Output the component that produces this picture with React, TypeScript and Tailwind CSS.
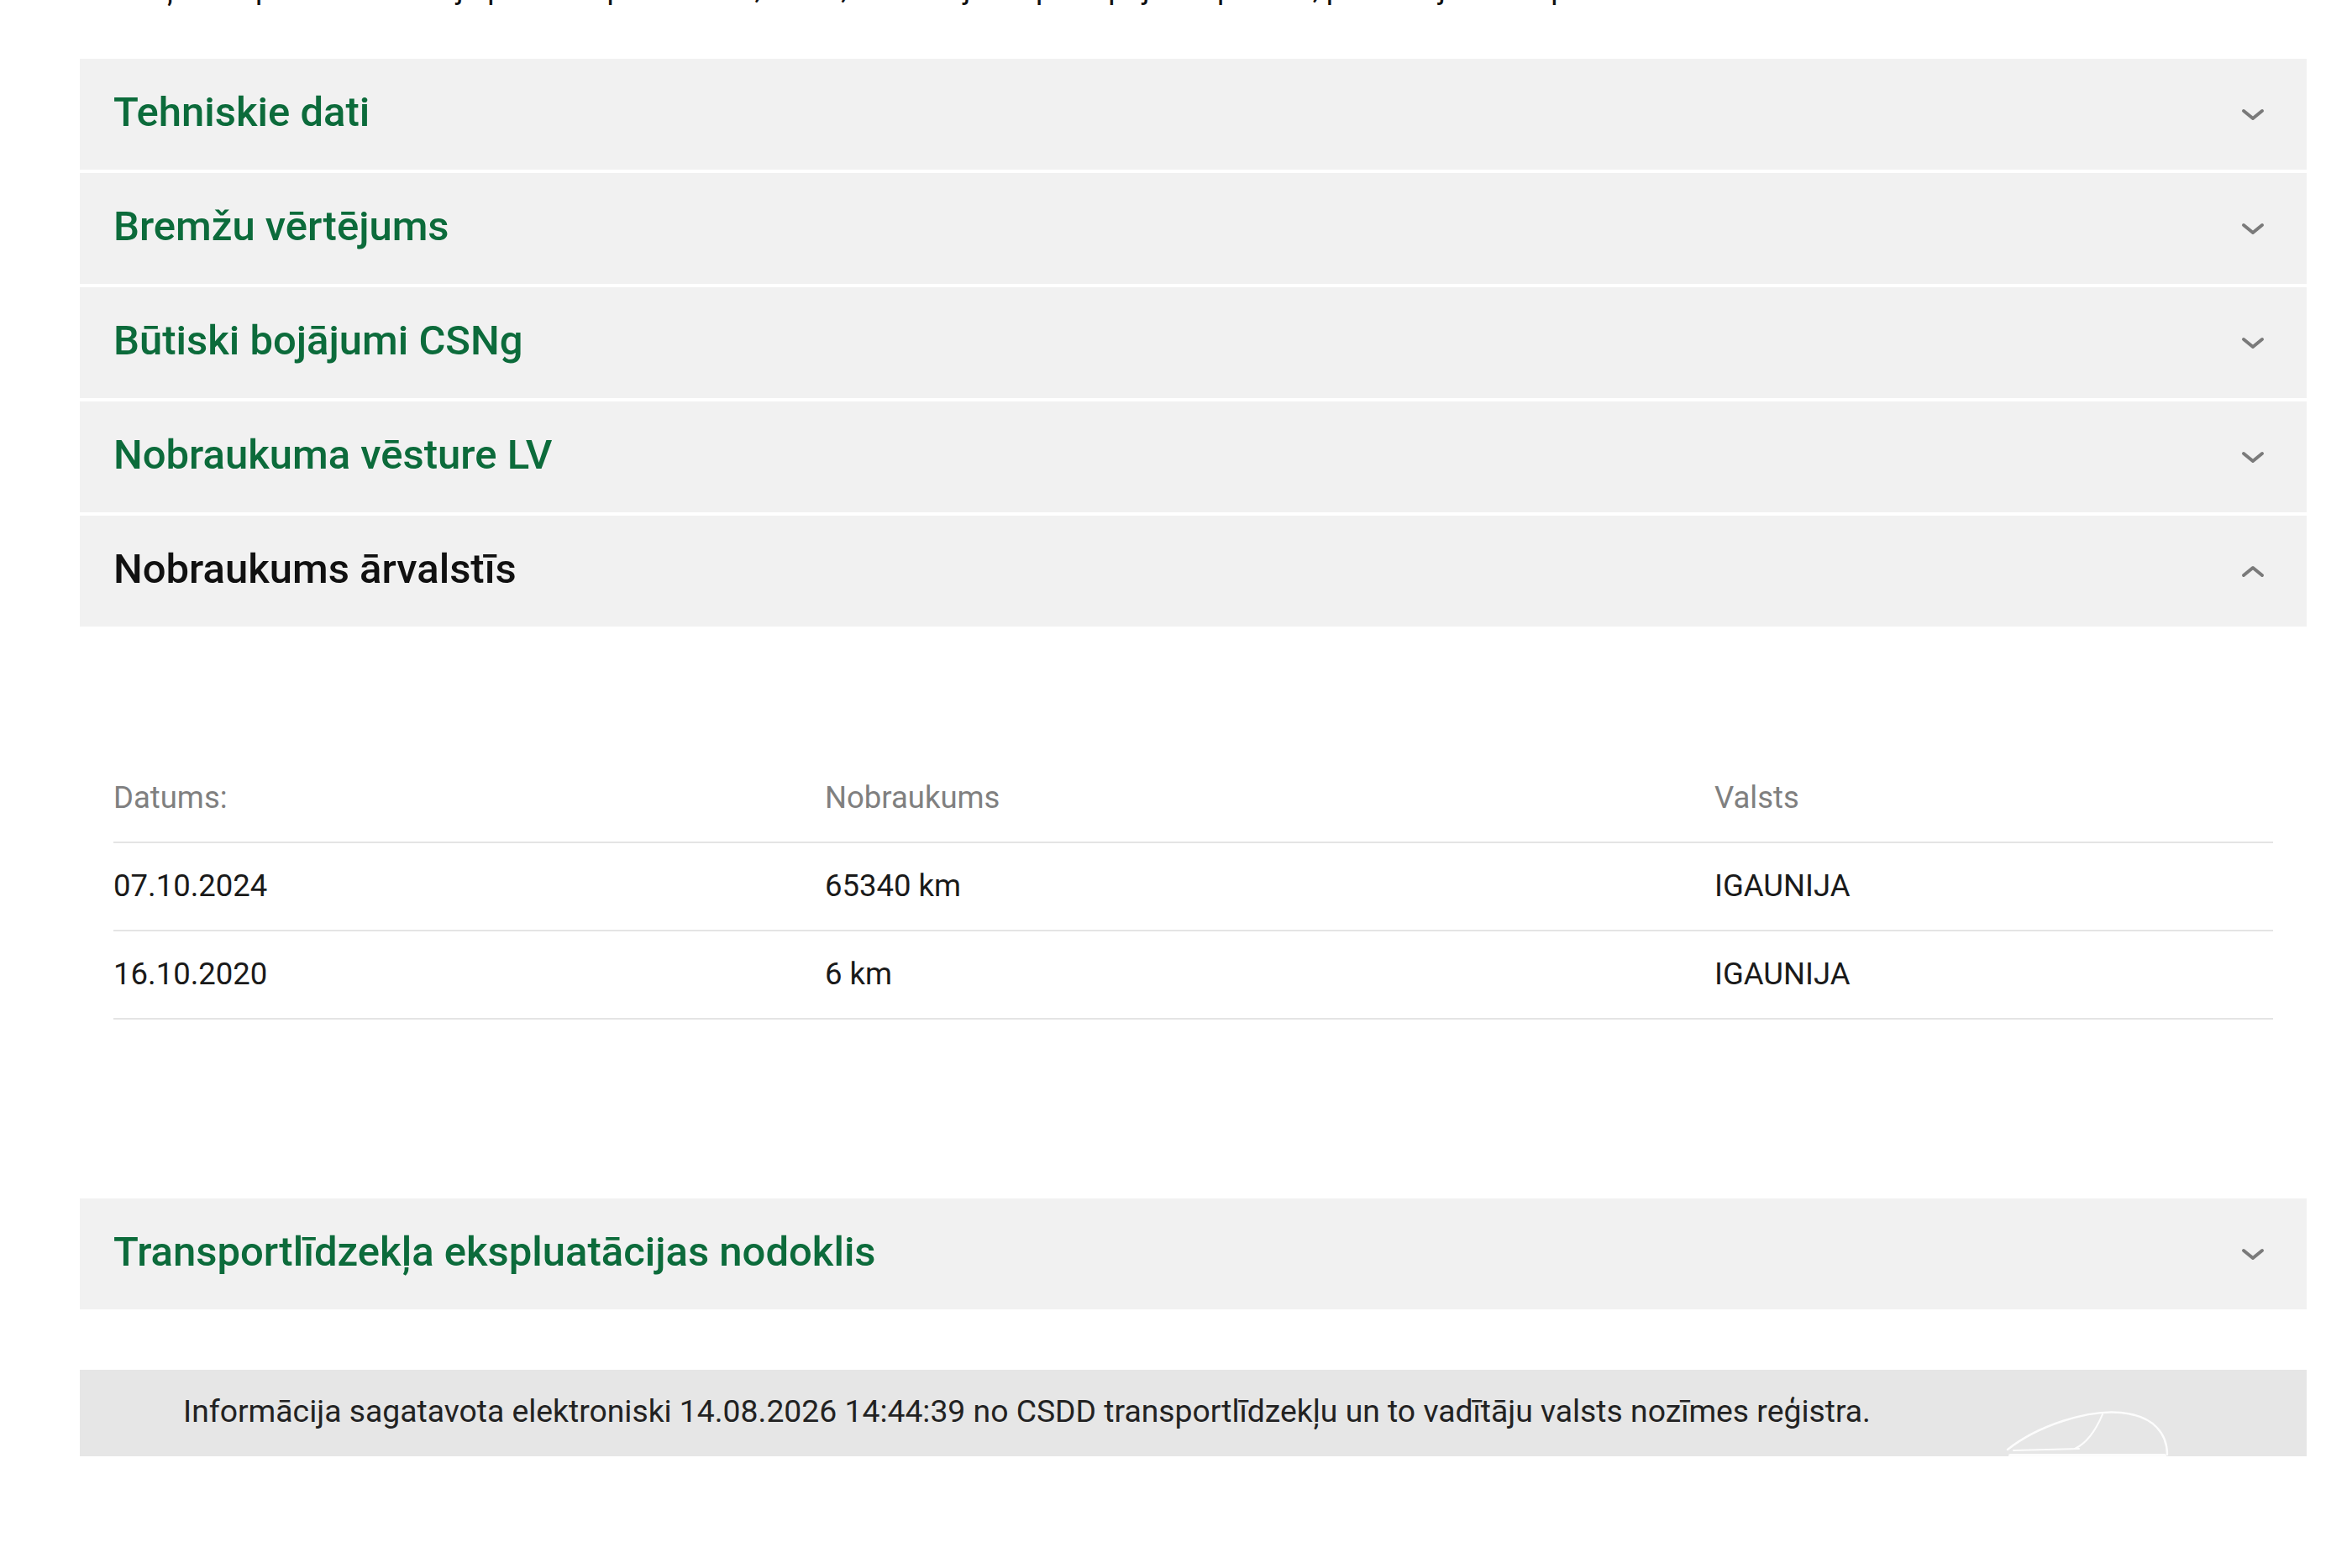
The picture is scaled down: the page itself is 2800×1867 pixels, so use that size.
import React from "react";

type Section = { title: string; open?: boolean };

const sections: Section[] = [
  { title: "Tehniskie dati" },
  { title: "Bremžu vērtējums" },
  { title: "Būtiski bojājumi CSNg" },
  { title: "Nobraukuma vēsture LV" },
  { title: "Nobraukums ārvalstīs", open: true },
];

const rows = [
  { date: "07.10.2024", km: "65340 km", country: "IGAUNIJA" },
  { date: "16.10.2020", km: "6 km", country: "IGAUNIJA" },
];

function Chevron({ up }: { up?: boolean }) {
  return (
    <svg width="30" height="18" viewBox="0 0 30 18" className="shrink-0">
      <polyline
        points={up ? "4,14 15,5 26,14" : "4,5 15,14 26,5"}
        fill="none"
        stroke="#7a7a7a"
        strokeWidth="4"
        strokeLinecap="round"
        strokeLinejoin="round"
      />
    </svg>
  );
}

function Header({ title, open }: Section) {
  return (
    <div className="flex h-[132px] items-center justify-between bg-[#f1f1f1] pl-[40px] pr-[49px]">
      <span
        className={
          "pb-[5px] text-[49px] font-medium leading-none " +
          (open ? "text-[#111111]" : "text-[#0c6b3b]")
        }
      >
        {title}
      </span>
      <Chevron up={open} />
    </div>
  );
}

export default function App() {
  return (
    <div
      className="min-h-[1867px] w-[2800px] bg-white"
      style={{ fontFamily: "Roboto, 'Noto Sans', Arial, sans-serif" }}
    >
      {/* last line of the preceding paragraph, scrolled mostly out of view */}
      <div className="h-[14px] overflow-hidden pl-[98px]">
        <p className="mt-[-38px] whitespace-nowrap text-[36px] leading-[48px] text-[#111111]">
          Lai saņemtu pilnu informāciju par transportlīdzekli, lūdzu, izmantojiet e-pakalpojumu
          portālu, pievienojot savu pieteikuma kodu.
        </p>
      </div>

      <div className="pl-[95px] pr-[54px] pt-[56px]">
        <div className="flex flex-col gap-[4px]">
          {sections.map((s) => (
            <Header key={s.title} {...s} />
          ))}
        </div>

        {/* expanded section: foreign mileage */}
        <div className="pb-[213px] pl-[40px] pr-[40px] pt-[153px]">
          <div className="grid grid-cols-[847px_1059px_1fr] text-[36.5px]">
            <div className="flex h-[105px] items-center border-b-2 border-[#e4e4e4] text-[#808080]">
              Datums:
            </div>
            <div className="flex h-[105px] items-center border-b-2 border-[#e4e4e4] text-[#808080]">
              Nobraukums
            </div>
            <div className="flex h-[105px] items-center border-b-2 border-[#e4e4e4] text-[#808080]">
              Valsts
            </div>
            {rows.map((r) => (
              <React.Fragment key={r.date}>
                <div className="flex h-[105px] items-center border-b-2 border-[#e4e4e4] text-[#1a1a1a]">
                  {r.date}
                </div>
                <div className="flex h-[105px] items-center border-b-2 border-[#e4e4e4] text-[#1a1a1a]">
                  {r.km}
                </div>
                <div className="flex h-[105px] items-center border-b-2 border-[#e4e4e4] text-[#1a1a1a]">
                  {r.country}
                </div>
              </React.Fragment>
            ))}
          </div>
        </div>

        <Header title="Transportlīdzekļa ekspluatācijas nodoklis" />

        <div className="relative mt-[72px] flex h-[103px] items-center overflow-hidden bg-[#e6e6e6] pl-[123px]">
          <span className="pb-[4px] text-[37.3px] text-[#222222]">
            Informācija sagatavota elektroniski 14.08.2026 14:44:39 no CSDD transportlīdzekļu un to
            vadītāju valsts nozīmes reģistra.
          </span>
          {/* faint emblem in the corner */}
          <svg
            width="200"
            height="56"
            viewBox="0 0 200 56"
            className="absolute left-[2290px] top-[47px]"
          >
            <g fill="none" stroke="#ffffff" strokeLinecap="round" opacity="0.9">
              <path d="M5 48 C40 20 100 0 140 4 C180 8 195 30 195 54" strokeWidth="2.5" />
              <path d="M118 6 C110 25 100 40 85 47" strokeWidth="2" />
              <path d="M12 49 L90 47" strokeWidth="2" />
              <path d="M8 55 L192 55" strokeWidth="4" />
            </g>
          </svg>
        </div>
      </div>
    </div>
  );
}
